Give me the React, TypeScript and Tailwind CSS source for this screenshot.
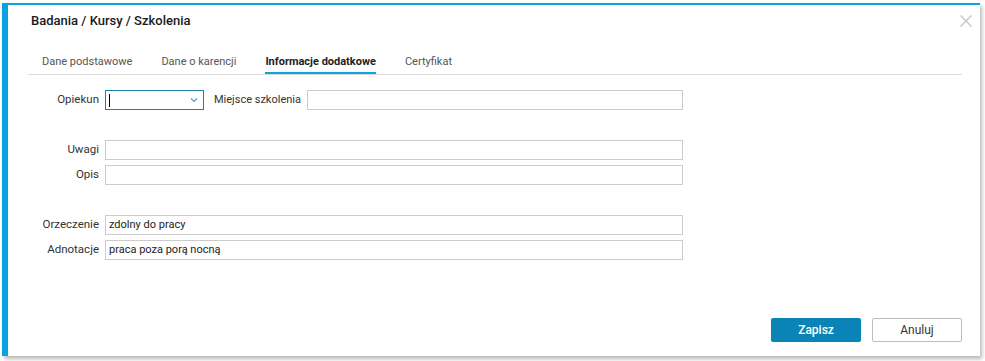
import React from 'react';

const labelCls = 'w-[91px] shrink-0 text-right text-[11.5px] text-[#333]';
const inputCls = 'h-[20px] border border-[#cccccc] bg-white pl-[3px] text-[11px] leading-[18px] text-[#222]';

const Row: React.FC<{ label: string; value?: string }> = ({ label, value }) => (
  <div className="flex h-[20px] items-center gap-[6px]">
    <span className={labelCls}>{label}</span>
    <div className={`${inputCls} w-[578px]`}>{value}</div>
  </div>
);

const tabs = ['Dane podstawowe', 'Dane o karencji', 'Informacje dodatkowe', 'Certyfikat'];

export default function App() {
  return (
    <div className="h-[361px] w-[985px] bg-white pl-[2px] pt-[3px]" style={{ fontFamily: 'Roboto, "Liberation Sans", sans-serif' }}>
      <div className="relative flex h-[353px] w-[978px] flex-col border-l-[6px] border-t-2 border-[#0aa3df] bg-white shadow-[2px_3px_4px_rgba(0,0,0,0.28)]">
        {/* close */}
        <svg className="absolute right-[8px] top-[10px] h-[12px] w-[12px]" viewBox="0 0 12 12">
          <path d="M0.5 0.5 L11.5 11.5 M11.5 0.5 L0.5 11.5" stroke="#c4c4c4" strokeWidth="1.4" />
        </svg>

        <h1 className="pl-[23px] pt-[6px] text-[13px] font-medium leading-[20px] text-[#1a1a1a]">
          Badania / Kursy / Szkolenia
        </h1>

        {/* tabs */}
        <div className="ml-[20px] mr-[18px] mt-[23px] flex gap-[29px] border-b border-[#dcdcdc] pl-[14px]">
          {tabs.map((t, i) => (
            <div
              key={t}
              className={`border-b-2 pb-[2px] text-[11px] leading-[16px] ${
                i === 2 ? 'border-[#0aa3df] font-bold text-[#222]' : 'border-transparent text-[#555]'
              }`}
            >
              {t}
            </div>
          ))}
        </div>

        {/* form */}
        <div className="mt-[15px] flex flex-col gap-[5px]">
          <div className="flex h-[20px] w-[675px] items-center">
            <span className={labelCls}>Opiekun</span>
            <div className="relative ml-[6px] flex h-[20px] w-[99px] shrink-0 items-center border border-[#1b7fa8] bg-white">
              <div className="ml-[3px] h-[13px] w-px bg-black" />
              <svg className="absolute right-[5px] top-[6px] h-[6px] w-[8px]" viewBox="0 0 8 6">
                <path d="M1 1.5 L4 4.5 L7 1.5" fill="none" stroke="#3a9fd0" strokeWidth="1.1" />
              </svg>
            </div>
            <span className="ml-[10px] w-[87px] shrink-0 whitespace-nowrap text-[11px] text-[#333]">Miejsce szkolenia</span>
            <div className={`${inputCls} ml-[6px] flex-1`} />
          </div>
          <div className="h-[20px]" />
          <Row label="Uwagi" />
          <Row label="Opis" />
          <div className="h-[20px]" />
          <Row label="Orzeczenie" value="zdolny do pracy" />
          <Row label="Adnotacje" value="praca poza porą nocną" />
        </div>

        {/* buttons */}
        <div className="mb-[14px] mr-[18px] mt-auto flex justify-end gap-[11px]">
          <button className="h-[24px] w-[90px] rounded-[2px] bg-[#0a84b6] text-[12px] font-medium text-white">
            Zapisz
          </button>
          <button className="h-[24px] w-[90px] rounded-[2px] border border-[#bdbdbd] bg-white text-[12px] text-[#333]">
            Anuluj
          </button>
        </div>
      </div>
    </div>
  );
}
